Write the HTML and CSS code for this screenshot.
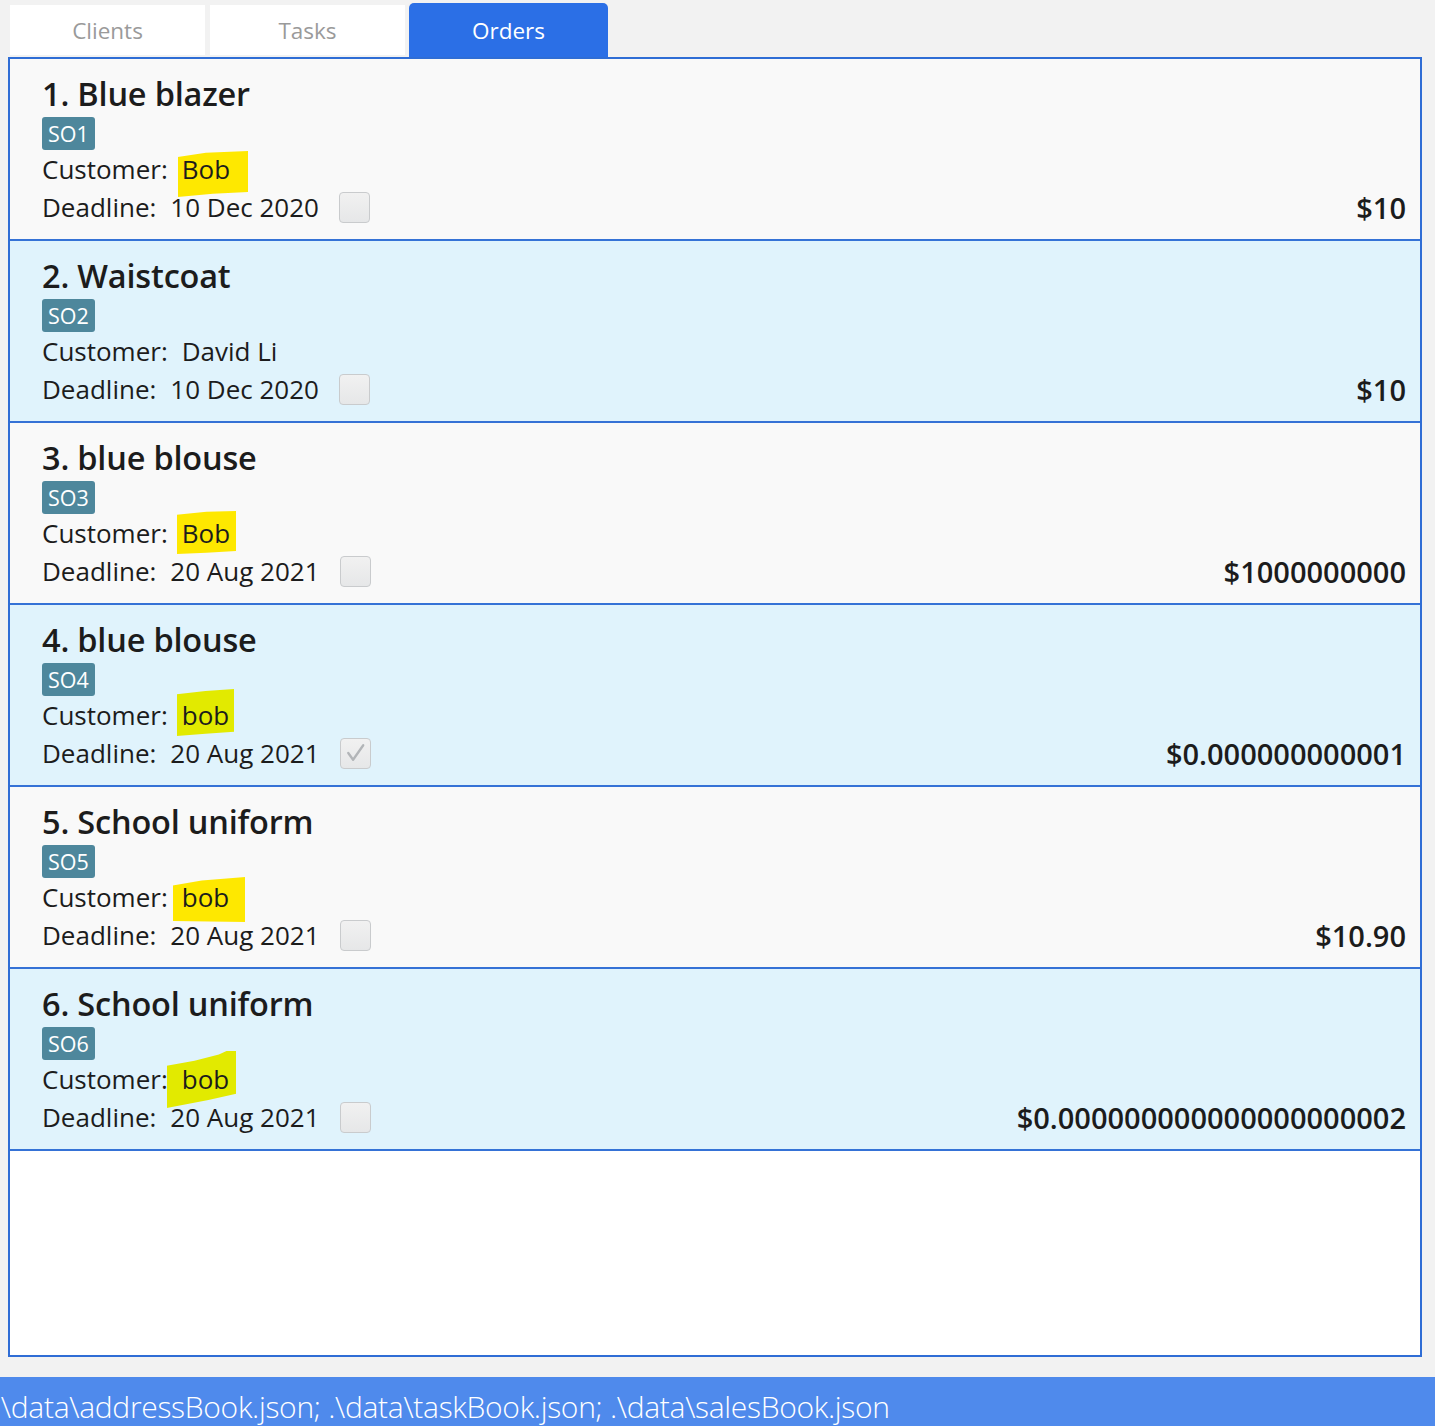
FILE: index.html
```html
<!DOCTYPE html>
<html>
<head>
<meta charset="utf-8">
<link rel="stylesheet" href="styles.css">
</head>
<body>
<div class="app">
  <div class="tabs">
    <div class="tab">Clients</div>
    <div class="tab">Tasks</div>
    <div class="tab active">Orders</div>
  </div>
  <div class="panel">
    <div class="card odd">
      <div class="title">1. Blue blazer</div>
      <div class="tag">SO1</div>
      <div class="row"><span class="label">Customer:</span><span class="name hl hl1">Bob</span></div>
      <div class="row"><span class="label">Deadline:</span><span class="date">10 Dec 2020</span><span class="check"></span><span class="price">$10</span></div>
    </div>
    <div class="card even">
      <div class="title">2. Waistcoat</div>
      <div class="tag">SO2</div>
      <div class="row"><span class="label">Customer:</span><span class="name">David Li</span></div>
      <div class="row"><span class="label">Deadline:</span><span class="date">10 Dec 2020</span><span class="check"></span><span class="price">$10</span></div>
    </div>
    <div class="card odd">
      <div class="title">3. blue blouse</div>
      <div class="tag">SO3</div>
      <div class="row"><span class="label">Customer:</span><span class="name hl hl3">Bob</span></div>
      <div class="row"><span class="label">Deadline:</span><span class="date">20 Aug 2021</span><span class="check"></span><span class="price">$1000000000</span></div>
    </div>
    <div class="card even">
      <div class="title">4. blue blouse</div>
      <div class="tag">SO4</div>
      <div class="row"><span class="label">Customer:</span><span class="name hl hl4">bob</span></div>
      <div class="row"><span class="label">Deadline:</span><span class="date">20 Aug 2021</span><span class="check checked"><svg viewBox="0 0 30 30" width="30" height="30"><path d="M7.5 15 L12.5 22 L23 7" fill="none" stroke="#b2b5b8" stroke-width="2.4" stroke-linecap="round" stroke-linejoin="round"/></svg></span><span class="price">$0.000000000001</span></div>
    </div>
    <div class="card odd">
      <div class="title">5. School uniform</div>
      <div class="tag">SO5</div>
      <div class="row"><span class="label">Customer:</span><span class="name hl hl5">bob</span></div>
      <div class="row"><span class="label">Deadline:</span><span class="date">20 Aug 2021</span><span class="check"></span><span class="price">$10.90</span></div>
    </div>
    <div class="card even">
      <div class="title">6. School uniform</div>
      <div class="tag">SO6</div>
      <div class="row"><span class="label">Customer:</span><span class="name hl hl6">bob</span></div>
      <div class="row"><span class="label">Deadline:</span><span class="date">20 Aug 2021</span><span class="check"></span><span class="price">$0.000000000000000000002</span></div>
    </div>
  </div>
  <div class="status">.\data\addressBook.json; .\data\taskBook.json; .\data\salesBook.json</div>
</div>
</body>
</html>
```
FILE: styles.css
```css
* { box-sizing: border-box; }
html, body { margin: 0; padding: 0; }
body {
  background: #f2f2f2;
  font-family: "Open Sans", "Noto Sans", sans-serif;
  color: #1c1c1c;
  width: 1435px;
  height: 1426px;
  overflow: hidden;
}
.app { display: flex; flex-direction: column; height: 1426px; }
.tabs {
  display: flex;
  height: 57px;
  padding: 3px 0 0 10px;
  gap: 5px;
  align-items: flex-start;
}
.tab {
  width: 195px;
  height: 50px;
  margin-top: 2px;
  background: #ffffff;
  color: #9a9a9a;
  font-size: 22.5px;
  display: flex;
  align-items: center;
  justify-content: center;
}
.tab.active {
  width: 199px;
  height: 54px;
  margin-top: 0;
  margin-left: -1px;
  background: #2b6fe6;
  color: #ffffff;
  border-radius: 5px 5px 0 0;
}
.panel {
  margin-left: 8px;
  width: 1414px;
  height: 1300px;
  border: 2px solid #2f6dd5;
  background: #ffffff;
}
.card {
  height: 182px;
  padding: 17px 14px 0 32px;
  border-bottom: 2px solid #3572d6;
}
.card.odd { background: #f9f9f9; }
.card.even { background: #e0f3fc; }
.title {
  font-size: 32.5px;
  font-weight: 600;
  line-height: 36px;
  height: 36px;
  letter-spacing: -0.2px;
}
.tag {
  display: inline-block;
  margin-top: 5px;
  height: 33px;
  padding: 0 6px;
  background: #4e879c;
  color: #ffffff;
  border-radius: 3px;
  font-size: 21.5px;
  line-height: 33px;
}
.row {
  display: flex;
  align-items: center;
  height: 38px;
  font-size: 26px;
}
.row:nth-of-type(1) { margin-top: 1px; }
.label { margin-right: 14px; }
.name { position: relative; z-index: 0; }
.hl::before {
  content: "";
  position: absolute;
  z-index: -1;
}
.odd .hl::before { background: #fee800; }
.even .hl::before { background: #e2ea00; }
.hl1::before { left: -4px; right: -18px; top: 0; bottom: -10px; clip-path: polygon(0 13%, 40% 4%, 100% 0, 100% 89%, 50% 93%, 0 100%); }
.hl3::before { left: -5px; right: -6px; top: -4px; bottom: -3px; clip-path: polygon(0 9%, 50% 2%, 100% 0, 100% 93%, 50% 97%, 0 100%); }
.hl4::before { left: -5px; right: -5px; top: -8px; bottom: -3px; clip-path: polygon(0 11%, 50% 4%, 100% 0, 100% 91%, 50% 95%, 0 100%); }
.hl5::before { left: -9px; right: -16px; top: -2px; bottom: -7px; clip-path: polygon(0 19%, 40% 8%, 100% 0, 100% 100%, 0 98%); }
.hl6::before { left: -15px; right: -7px; top: -10px; bottom: -11px; clip-path: polygon(0 26%, 40% 17%, 75% 6%, 86% 0, 100% 0, 100% 75%, 60% 86%, 0 100%); }
.date { margin-right: 20px; }
.check {
  width: 31px;
  height: 31px;
  border: 1px solid #c9cbcd;
  border-radius: 4px;
  background: linear-gradient(#f1f1f1, #e6e7e8);
  display: flex;
  align-items: center;
  justify-content: center;
}
.check svg { display: block; }
.price {
  margin-left: auto;
  font-size: 29px;
  font-weight: 600;
}
.status {
  margin-top: 20px;
  height: 49px;
  padding-top: 10px;
  background: #4f8aec;
  color: #ffffff;
  font-size: 30px;
  font-weight: 300;
  line-height: 39px;
  text-indent: -6px;
  white-space: nowrap;
  overflow: hidden;
  letter-spacing: -0.3px;
}
```
